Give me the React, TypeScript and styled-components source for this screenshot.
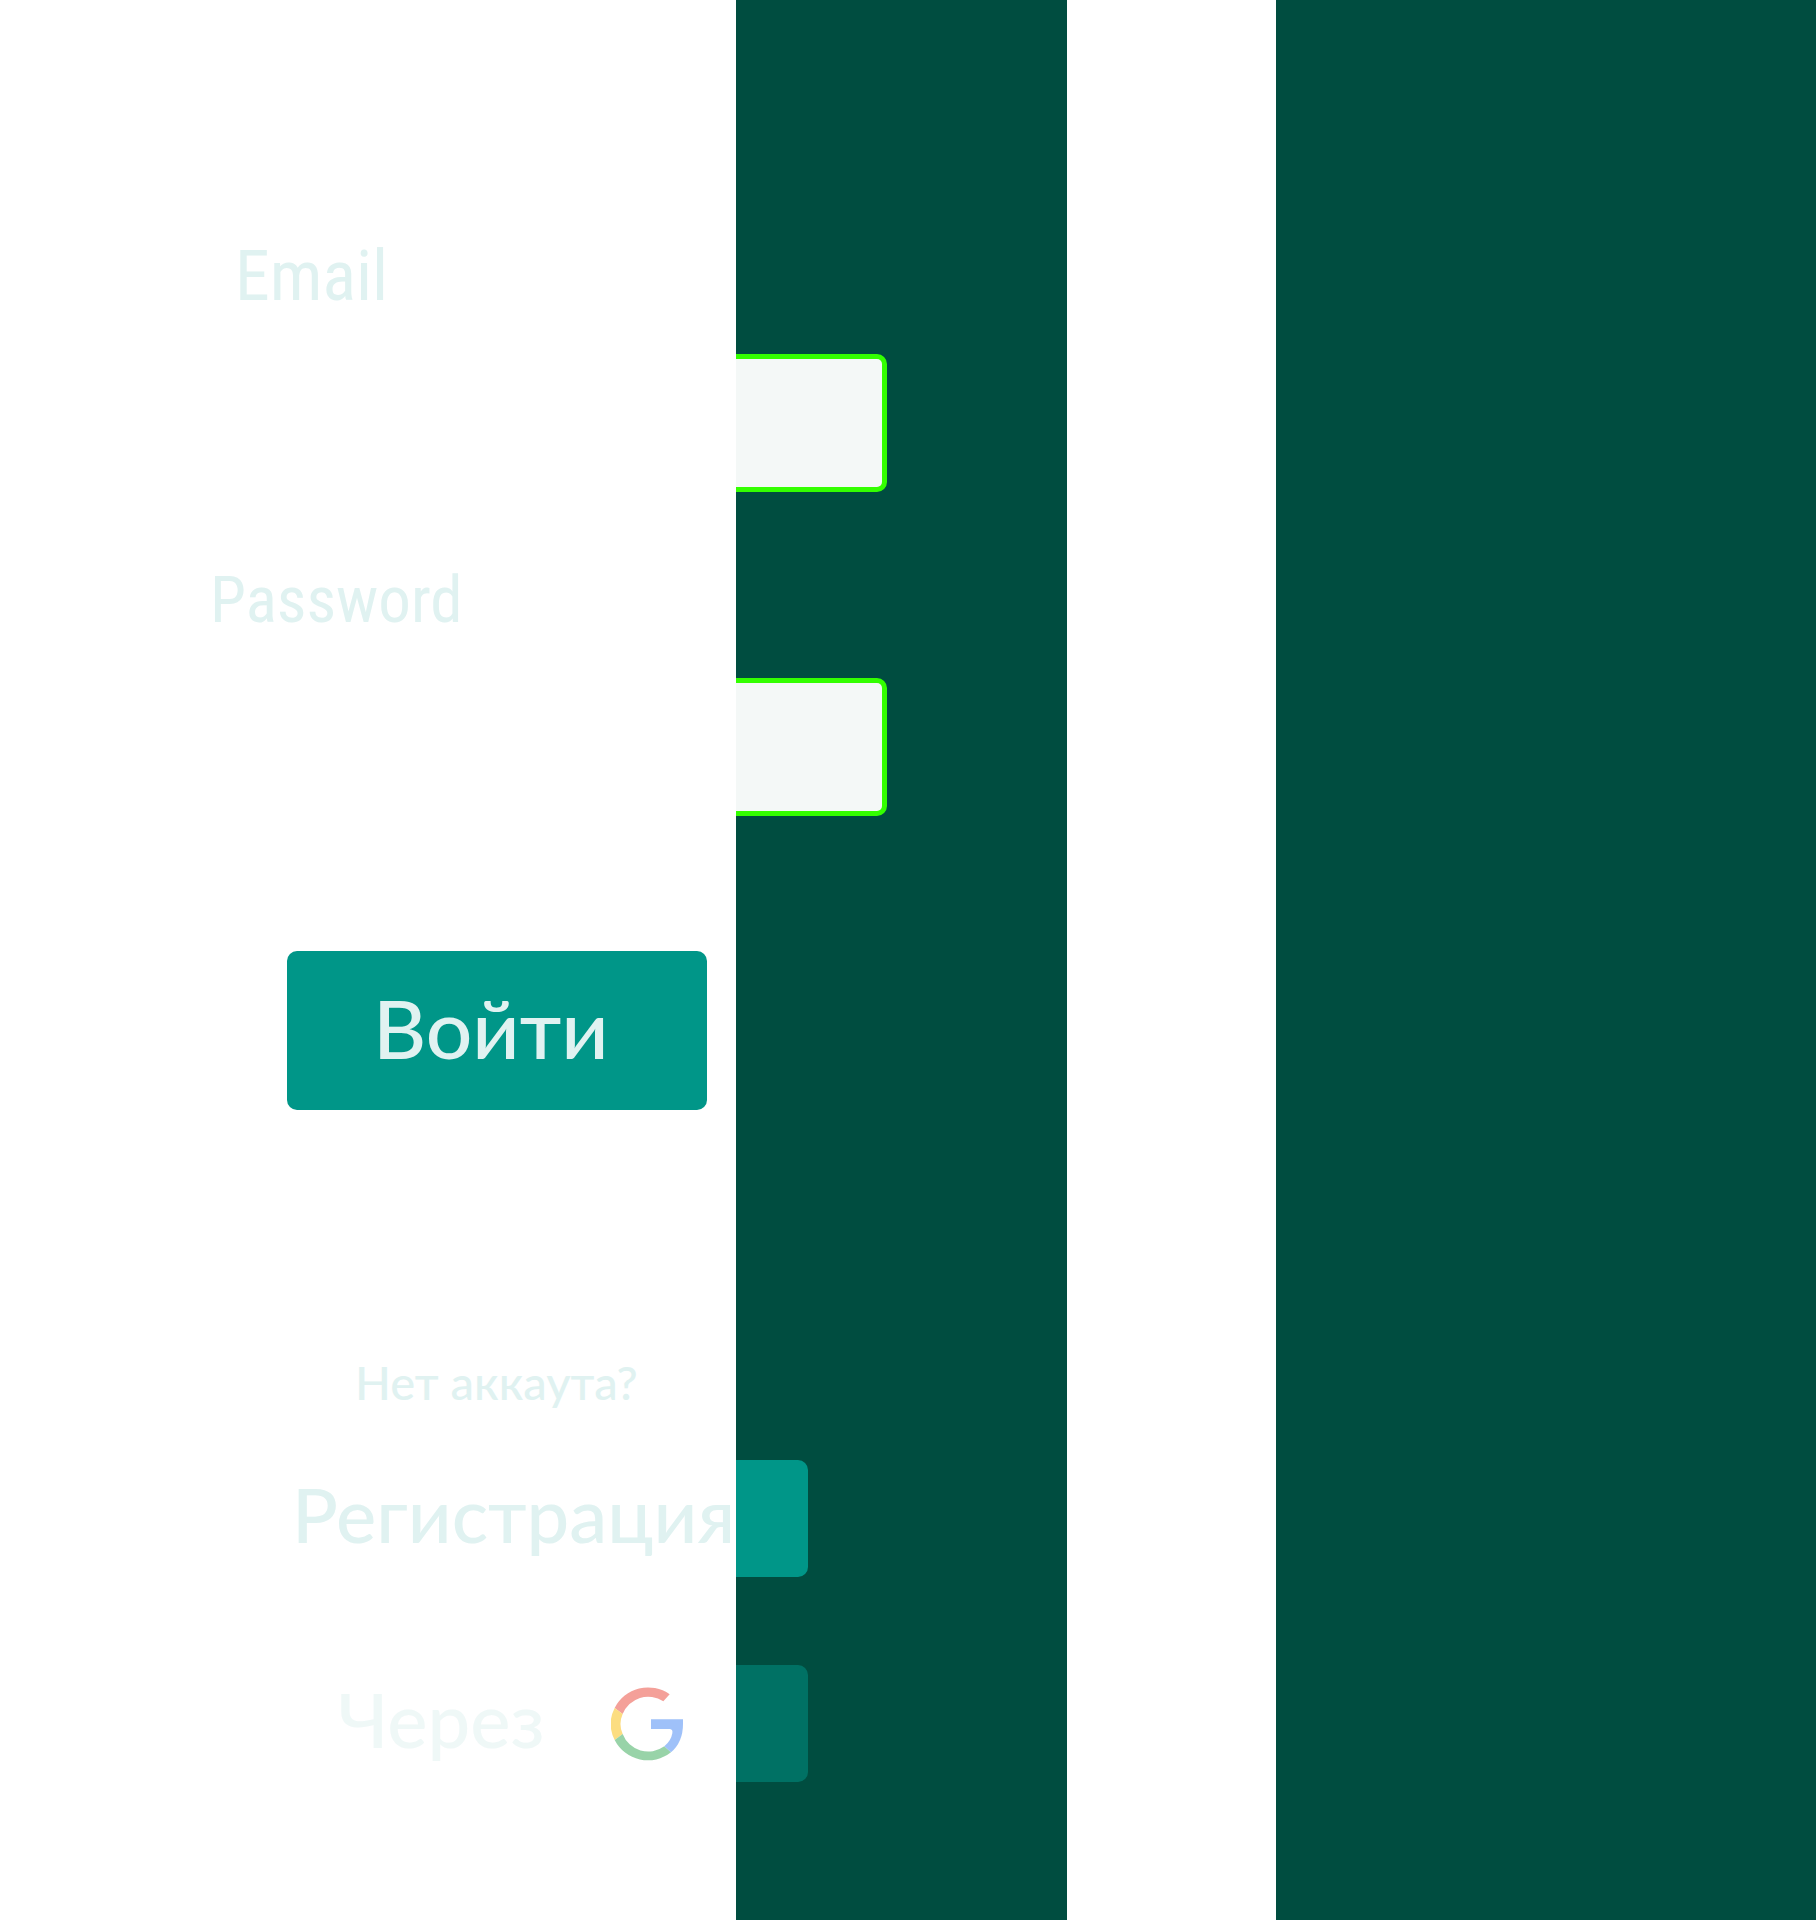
import React from 'react';
import styled, { createGlobalStyle } from 'styled-components';

const colors = {
  paper: '#ffffff',
  deep: '#004d40',
  teal: '#009688',
  mint: '#e0f2f1',
  field: '#f4f8f7',
  outline: '#33ff00',
};

const GlobalStyle = createGlobalStyle`
  *, *::before, *::after { box-sizing: border-box; }
  body { margin: 0; background: ${colors.paper}; }
`;

const Page = styled.main`
  display: grid;
  grid-template-columns: 736fr 331fr 209fr 540fr;
  min-height: 100vh;
  background: ${colors.paper};
  color: ${colors.mint};
  font-family: Lato, 'Open Sans', sans-serif;
  font-weight: 500;
`;

const Stripe = styled.div<{ $column: number }>`
  grid-column: ${(p) => p.$column};
  grid-row: 1;
  background: ${colors.deep};
`;

const Form = styled.form`
  grid-column: 1 / span 2;
  grid-row: 1;
  z-index: 1;
  display: grid;
  grid-template-columns: subgrid;
  align-content: start;
  padding: 236px 0 136px;
`;

const Field = styled.div`
  grid-column: 1 / -1;
  display: grid;
  grid-template-columns: subgrid;
  row-gap: 38px;
  margin-bottom: 68px;
`;

const FieldLabel = styled.label<{ $size: number; $indent: number }>`
  grid-column: 1;
  padding-left: ${(p) => p.$indent}px;
  font-family: 'Roboto Condensed', Roboto, sans-serif;
  font-size: ${(p) => p.$size}px;
  font-weight: 400;
  line-height: 80px;
`;

const FieldInput = styled.input`
  grid-column: 2;
  grid-row: 2;
  width: 151px;
  height: 138px;
  padding: 0 16px;
  border: 5px solid ${colors.outline};
  border-left: 0;
  border-radius: 0 10px 10px 0;
  background: ${colors.field};
  color: ${colors.deep};
  font-family: inherit;
  font-size: 47px;
  outline: none;
`;

const LoginButton = styled.button`
  grid-column: 1;
  width: 420px;
  height: 159px;
  margin: 67px 0 244px 287px;
  padding: 0 0 8px 86px;
  border: 0;
  border-radius: 10px;
  background: ${colors.teal};
  color: inherit;
  font-family: inherit;
  font-size: 82px;
  font-weight: inherit;
  line-height: 96px;
  text-align: left;
  cursor: pointer;
`;

const Hint = styled.p`
  grid-column: 1;
  margin: 0 0 50px;
  padding-left: 355px;
  font-size: 47px;
  line-height: 56px;
`;

const WideButton = styled.button<{ $faded?: boolean }>`
  grid-column: 1 / -1;
  display: grid;
  grid-template-columns: subgrid;
  height: 117px;
  margin: 0 0 88px;
  padding: 0;
  border: 0;
  background: none;
  color: inherit;
  font-family: inherit;
  font-size: 76px;
  font-weight: inherit;
  line-height: 92px;
  text-align: left;
  opacity: ${(p) => (p.$faded ? 0.5 : 1)};
  cursor: pointer;

  &:last-child { margin-bottom: 0; }
`;

const Caption = styled.span<{ $indent: number }>`
  display: flex;
  align-items: center;
  gap: 66px;
  height: 117px;
  padding-left: ${(p) => p.$indent}px;
  white-space: nowrap;
`;

const CaptionText = styled.span`
  padding-bottom: 10px;
`;

const ButtonEnd = styled.span`
  width: 72px;
  height: 117px;
  border-radius: 0 10px 10px 0;
  background: ${colors.teal};
`;

const Logo = styled.svg`
  flex: none;
  width: 72px;
  height: 74px;
`;

function GoogleLogo() {
  return (
    <Logo viewBox="60 54 216 222" role="img" aria-label="Google">
      <path fill="#ea4335" d="M236 76A112 112 0 0 0 71 117L95 135A82 82 0 0 1 217 97Z" />
      <path fill="#fbbc05" d="M71 117A106 106 0 0 0 71 213L95 195A74 74 0 0 1 95 135Z" />
      <path fill="#34a853" d="M71 213A112 112 0 0 0 240 250L220 232A82 82 0 0 1 95 195Z" />
      <path fill="#4285f4" d="M240 250Q276 219 276 165V151H180V180H237Q246 181 244 193Q240 216 220 232Z" />
    </Logo>
  );
}

export default function App() {
  return (
    <>
      <GlobalStyle />
      <Page>
        <Stripe $column={2} />
        <Stripe $column={4} />
        <Form onSubmit={(e) => e.preventDefault()}>
          <Field>
            <FieldLabel htmlFor="email" $size={70} $indent={235}>Email</FieldLabel>
            <FieldInput id="email" type="email" />
          </Field>
          <Field>
            <FieldLabel htmlFor="password" $size={65} $indent={210}>Password</FieldLabel>
            <FieldInput id="password" type="password" />
          </Field>
          <LoginButton type="submit">Войти</LoginButton>
          <Hint>Нет аккаута?</Hint>
          <WideButton type="button">
            <Caption $indent={292}>
              <CaptionText>Регистрация</CaptionText>
            </Caption>
            <ButtonEnd />
          </WideButton>
          <WideButton type="button" $faded>
            <Caption $indent={338}>
              <CaptionText>Через</CaptionText>
              <GoogleLogo />
            </Caption>
            <ButtonEnd />
          </WideButton>
        </Form>
      </Page>
    </>
  );
}
